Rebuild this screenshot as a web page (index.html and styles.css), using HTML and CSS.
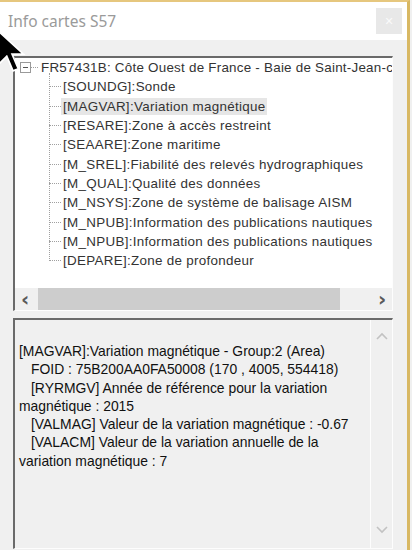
FILE: index.html
```html
<!DOCTYPE html>
<html lang="fr">
<head>
  <meta charset="UTF-8">
  <meta name="viewport" content="width=device-width, initial-scale=1.0">
  <title>Info cartes S57</title>
  <link rel="stylesheet" href="styles.css">
</head>
<body>
  <div class="window">
    <div class="titlebar">
      <span class="title">Info cartes S57</span>
      <span class="close">&#x2715;</span>
    </div>
    <div class="client">
      <div class="tree">
        <div class="tree-list">
          <div class="root">
            <span class="toggle"></span>
            <span class="root-link"></span>
            <span class="label root-label">FR57431B: Côte Ouest de France - Baie de Saint-Jean-c</span>
          </div>
          <ul class="children">
            <li><span class="label">[SOUNDG]:Sonde</span></li>
            <li><span class="label selected">[MAGVAR]:Variation magnétique</span></li>
            <li><span class="label">[RESARE]:Zone à accès restreint</span></li>
            <li><span class="label">[SEAARE]:Zone maritime</span></li>
            <li><span class="label">[M_SREL]:Fiabilité des relevés hydrographiques</span></li>
            <li><span class="label">[M_QUAL]:Qualité des données</span></li>
            <li><span class="label">[M_NSYS]:Zone de système de balisage AISM</span></li>
            <li><span class="label">[M_NPUB]:Information des publications nautiques</span></li>
            <li><span class="label">[M_NPUB]:Information des publications nautiques</span></li>
            <li><span class="label">[DEPARE]:Zone de profondeur</span></li>
          </ul>
        </div>
        <div class="hscroll">
          <span class="arrow">&lsaquo;</span>
          <div class="track"><div class="thumb"></div></div>
          <span class="arrow">&rsaquo;</span>
        </div>
      </div>
      <div class="info">
        <div class="info-text">
          <p>[MAGVAR]:Variation magnétique - Group:2 (Area)</p>
          <p class="indent">FOID : 75B200AA0FA50008 (170 , 4005, 554418)</p>
          <p class="indent">[RYRMGV] Année de référence pour la variation</p>
          <p>magnétique : 2015</p>
          <p class="indent">[VALMAG] Valeur de la variation magnétique : -0.67</p>
          <p class="indent">[VALACM] Valeur de la variation annuelle de la</p>
          <p>variation magnétique : 7</p>
        </div>
        <div class="vscroll">
          <svg width="12" height="8" viewBox="0 0 12 8"><path d="M1 7 L6 2 L11 7" fill="none" stroke="#c2c2c2" stroke-width="1.6"/></svg>
          <svg width="12" height="8" viewBox="0 0 12 8"><path d="M1 1 L6 6 L11 1" fill="none" stroke="#c2c2c2" stroke-width="1.6"/></svg>
        </div>
      </div>
    </div>
  </div>
  <svg class="cursor" width="32" height="46" viewBox="0 0 15 22">
    <path d="M1 1 L1 17 L5 13 L8 20 L10.5 19 L7.5 12 L13 12 Z" fill="#000" stroke="#fff" stroke-width="0.8"/>
  </svg>
</body>
</html>
```

FILE: styles.css
```css
html, body {
  margin: 0;
  padding: 0;
}
body {
  width: 412px;
  height: 550px;
  overflow: hidden;
  position: relative;
  background: #f0f0f0;
}
.window {
  height: 548px;
  border-top: 2px solid #e6c77e;
  border-right: 3px solid #d8b863;
  margin-right: 2px;
  background: #f0f0f0;
}
.titlebar {
  height: 38px;
  background: #fff;
  display: flex;
  align-items: center;
  justify-content: space-between;
}
.title {
  font-family: "Noto Sans", sans-serif;
  font-size: 15.5px;
  color: #9a9a9a;
  padding-left: 8px;
}
.close {
  width: 26px;
  height: 26px;
  margin-right: 5px;
  background: #e8e8e8;
  color: #fafafa;
  font-family: "DejaVu Sans", sans-serif;
  font-size: 11px;
  display: flex;
  align-items: center;
  justify-content: center;
}
.client {
  padding: 16px 14px 0 13px;
}

/* tree */
.tree {
  height: 252px;
  border-top: 2px solid #6a6a6a;
  border-left: 2px solid #6a6a6a;
  border-right: 1px solid #fdfdfd;
  border-bottom: 1px solid #fdfdfd;
  background: #fff;
  display: flex;
  flex-direction: column;
  font-family: "Liberation Sans", sans-serif;
  font-size: 13.4px;
  letter-spacing: 0.3px;
  color: #333;
}
.tree-list {
  flex: 1;
  overflow: hidden;
  white-space: nowrap;
}
.root {
  height: 19.3px;
  display: flex;
  align-items: center;
  padding-left: 5px;
}
.root-label {
  letter-spacing: 0.24px;
}
.toggle {
  width: 9px;
  height: 9px;
  border: 1px solid #9a9a9a;
  position: relative;
  flex: none;
}
.toggle::after {
  content: "";
  position: absolute;
  left: 2px;
  top: 4px;
  width: 5px;
  border-top: 1px solid #555;
}
.root-link {
  width: 7px;
  border-top: 1px dotted #a0a0a0;
  margin-right: 1px;
  flex: none;
}
.children {
  list-style: none;
  margin: 0 0 0 34px;
  padding: 0;
  position: relative;
}
.children::before {
  content: "";
  position: absolute;
  left: 0;
  top: -4px;
  bottom: 9px;
  border-left: 1px dotted #a0a0a0;
}
.children li {
  height: 19.3px;
  display: flex;
  align-items: center;
}
.children li::before {
  content: "";
  width: 12px;
  border-top: 1px dotted #a0a0a0;
  flex: none;
}
.label {
  padding: 1px 2px;
}
.selected {
  background: #e6e6e6;
}
.hscroll {
  height: 22px;
  display: flex;
  align-items: center;
  background: #f0f0f0;
  letter-spacing: 0;
}
.hscroll .arrow {
  width: 20px;
  text-align: center;
  font-family: "DejaVu Sans", sans-serif;
  font-size: 20px;
  font-weight: bold;
  color: #5a5a5a;
  line-height: 22px;
}
.track {
  flex: 1;
  height: 22px;
  padding-right: 32px;
}
.thumb {
  height: 100%;
  margin-left: 3px;
  background: #cdcdcd;
}

/* info panel */
.info {
  margin-top: 7px;
  height: 228px;
  border-top: 2px solid #6a6a6a;
  border-left: 2px solid #6a6a6a;
  border-right: 1px solid #fdfdfd;
  border-bottom: 1px solid #fdfdfd;
  display: flex;
  font-family: "Liberation Sans", sans-serif;
  font-size: 13.9px;
  color: #111;
}
.info-text {
  flex: 1;
  padding: 22px 0 0 4px;
  border-right: 1px solid #fdfdfd;
}
.info-text p {
  margin: 0;
  line-height: 18.3px;
  white-space: nowrap;
}
.info-text .indent {
  padding-left: 12px;
}
.vscroll {
  width: 21px;
  display: flex;
  flex-direction: column;
  justify-content: space-between;
  align-items: center;
  padding: 12px 0 14px;
}
.cursor {
  position: absolute;
  left: -4px;
  top: 29px;
}
```
